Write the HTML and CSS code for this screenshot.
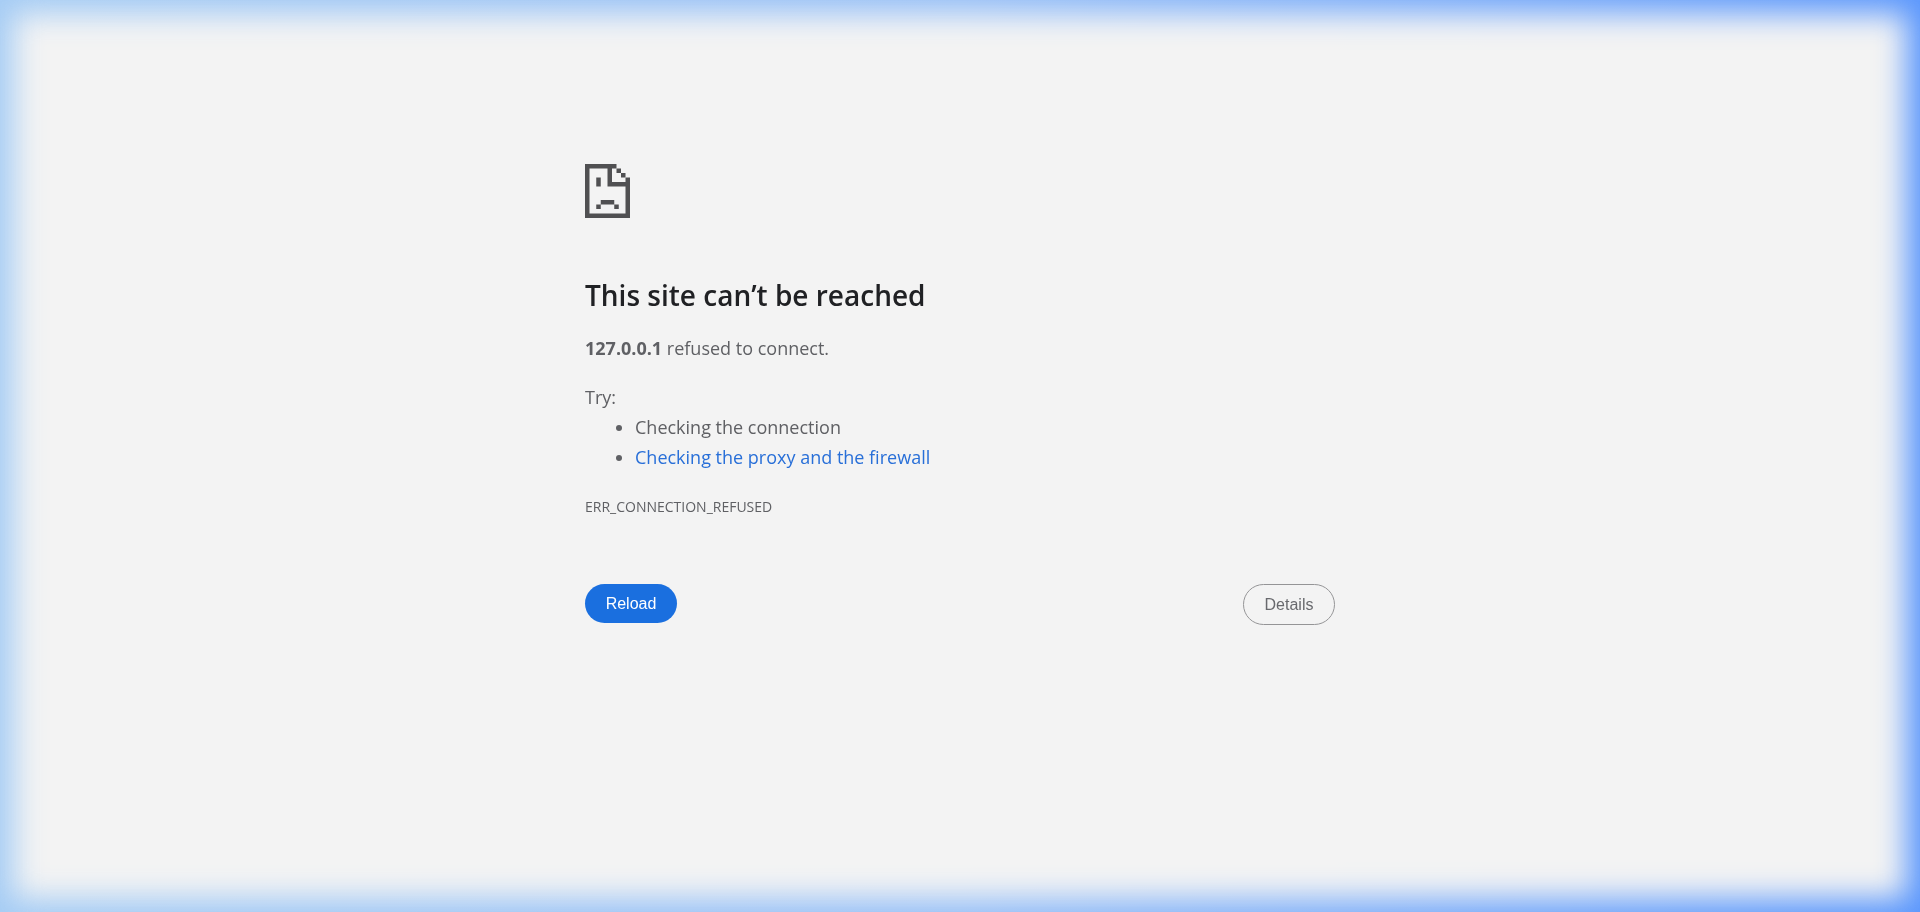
FILE: index.html
```html
<!DOCTYPE html>
<html lang="en">
    <head>
        <meta charset="utf-8">
        <meta name="viewport" content="width=device-width, initial-scale=1">
        <title>127.0.0.1</title>
        <link rel="stylesheet" href="styles.css">
    </head>

    <body>
        <main class="content">
            <!-- sad page icon -->
            <svg class="icon" viewBox="0 0 20 24" aria-hidden="true">
                <path d="M0 0h14v2h-2v6h6V6h2v18H0zM2 2v20h16V10h-8V2z" fill-rule="evenodd"/>
                <path d="M14 2h2v2h-2zM16 4h2v2h-2zM5 6h2v4H5zM7 16h6v2H7zM5 18h2v2H5zM13 18h2v2h-2z"/>
            </svg>

            <h1>This site can’t be reached</h1>
            <p><strong>127.0.0.1</strong> refused to connect.</p>

            <div class="suggestions">
                <p>Try:</p>
                <ul>
                    <li>Checking the connection</li>
                    <li><a href="#buttons">Checking the proxy and the firewall</a></li>
                </ul>
            </div>

            <div class="error-code">ERR_CONNECTION_REFUSED</div>

            <div class="buttons" id="buttons">
                <button type="button" class="reload" onclick="location.reload()">Reload</button>
                <button type="button" class="details">Details</button>
            </div>
        </main>
    </body>
</html>
```
FILE: styles.css
```css
body {
    margin: 0;
    min-height: 100vh;
    overflow-x: hidden;
    background: linear-gradient(to right, #a6cdf5, #97c0f8 50%, #5c98fd) fixed;
    color: #5f6064;
    font-family: "Open Sans", "Noto Sans", sans-serif;
    font-size: 18px;
    line-height: 30px;
}

/* soft edge of the glow around the window */
body::before {
    content: "";
    position: fixed;
    inset: 14px;
    z-index: -1;
    background: #f3f3f3;
    filter: blur(15px);
}

.content {
    box-sizing: border-box;
    max-width: 750px;
    margin: 0 auto;
    padding-top: 164px;
}

.icon {
    display: block;
    width: 45px;
    height: 54px;
    fill: #505052;
}

h1 {
    margin: 59px 0 20px;
    color: #202124;
    font-size: 28px;
    font-weight: 600;
    line-height: 36px;
}

p {
    margin: 0;
}

.suggestions {
    margin-top: 19px;
}

ul {
    margin: 0;
    padding-left: 50px;
}

a {
    color: #286fd8;
    text-decoration: none;
}

a:hover {
    text-decoration: underline;
}

.error-code {
    margin-top: 23px;
    font-size: 14px;
    line-height: 24px;
}

.buttons {
    display: flex;
    justify-content: space-between;
    align-items: flex-start;
    margin-top: 65px;
}

button {
    min-width: 92px;
    padding: 10px 20px;
    border: 0;
    border-radius: 21px;
    font-family: "Liberation Sans", Arial, sans-serif;
    font-size: 16px;
    line-height: 19px;
    cursor: pointer;
}

.reload {
    background: #1a6fdf;
    color: #fff;
}

.details {
    border: 1px solid #949496;
    background: transparent;
    color: #68696d;
}
```
